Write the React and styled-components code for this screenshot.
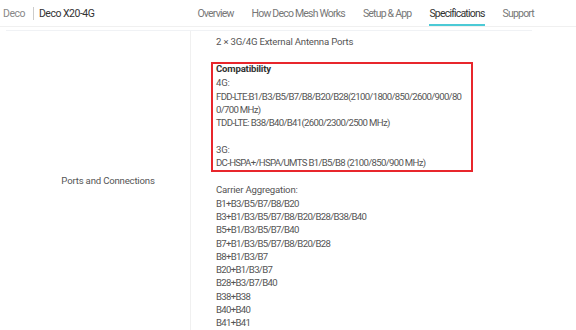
import styled, { createGlobalStyle } from "styled-components";

const GlobalStyle = createGlobalStyle`
  body {
    margin: 0;
    background: #fff;
    font-family: Roboto, "Liberation Sans", sans-serif;
    color: #555;
  }
`;

const Header = styled.div`
  display: flex;
  align-items: center;
  height: 26px;
  border-bottom: 1px solid #f0f0f0;
  font-size: 10.5px;
  letter-spacing: -0.8px;
`;

const Brand = styled.div`
  display: flex;
  align-items: center;
  padding-left: 3px;
  color: #888;
  letter-spacing: -0.5px;
`;

const Divider = styled.span`
  width: 1px;
  height: 13px;
  background: #ccc;
  margin: 0 5px 0 8px;
`;

const Model = styled.span`
  color: #333;
`;

const Nav = styled.nav`
  display: flex;
  margin-left: auto;
  margin-right: 42px;
  gap: 18px;
  height: 100%;
`;

const NavItem = styled.div`
  display: flex;
  align-items: center;
  height: 100%;
  box-sizing: border-box;
  color: ${(p) => (p.active ? "#333" : "#777")};
  border-bottom: 2px solid ${(p) => (p.active ? "#4ccad6" : "transparent")};
  padding-top: 2px;
`;

const Table = styled.div`
  display: flex;
  margin: 3px 44px 0 6px;
  border-top: 1px solid #f0f2f5;
  font-size: 9.6px;
  line-height: 13.3px;
  letter-spacing: -0.02em;
`;

const Label = styled.div`
  width: 184px;
  display: flex;
  align-items: center;
  justify-content: center;
  padding-left: 20px;
  box-sizing: border-box;
  color: #555;
`;

const Value = styled.div`
  flex: 1;
  border-left: 1px solid #f0f0f0;
  padding: 4px 0 0 25px;
`;

const Line = styled.div`
  color: #555;
  min-height: 13.3px;
  letter-spacing: ${(p) => (p.$code ? "-0.07em" : "inherit")};
`;

const Highlight = styled.div`
  width: 252px;
  margin: 14px 0 11px -5px;
  padding: 0 3px 1px 3px;
  border: 2px solid #e8262c;
  word-break: break-all;
`;

const Title = styled.div`
  font-weight: 700;
  color: #333;
  line-height: 10px;
  padding-bottom: 2px;
`;

const bands = [
  "B1+B3/B5/B7/B8/B20",
  "B3+B1/B3/B5/B7/B8/B20/B28/B38/B40",
  "B5+B1/B3/B5/B7/B40",
  "B7+B1/B3/B5/B7/B8/B20/B28",
  "B8+B1/B3/B7",
  "B20+B1/B3/B7",
  "B28+B3/B7/B40",
  "B38+B38",
  "B40+B40",
  "B41+B41",
];

export default function App() {
  return (
    <>
      <GlobalStyle />
      <Header>
        <Brand>
          Deco
          <Divider />
          <Model>Deco X20-4G</Model>
        </Brand>
        <Nav>
          <NavItem>Overview</NavItem>
          <NavItem>How Deco Mesh Works</NavItem>
          <NavItem>Setup &amp; App</NavItem>
          <NavItem active>Specifications</NavItem>
          <NavItem>Support</NavItem>
        </Nav>
      </Header>
      <Table>
        <Label>Ports and Connections</Label>
        <Value>
          <Line>2 × 3G/4G External Antenna Ports</Line>
          <Highlight>
            <Title>Compatibility</Title>
            <Line>4G:</Line>
            <Line $code>FDD-LTE:B1/B3/B5/B7/B8/B20/B28(2100/1800/850/2600/900/800/700 MHz)</Line>
            <Line $code>TDD-LTE: B38/B40/B41(2600/2300/2500 MHz)</Line>
            <Line />
            <Line>3G:</Line>
            <Line $code>DC-HSPA+/HSPA/UMTS B1/B5/B8 (2100/850/900 MHz)</Line>
          </Highlight>
          <Line>Carrier Aggregation:</Line>
          {bands.map((b) => (
            <Line $code key={b}>
              {b}
            </Line>
          ))}
        </Value>
      </Table>
    </>
  );
}
